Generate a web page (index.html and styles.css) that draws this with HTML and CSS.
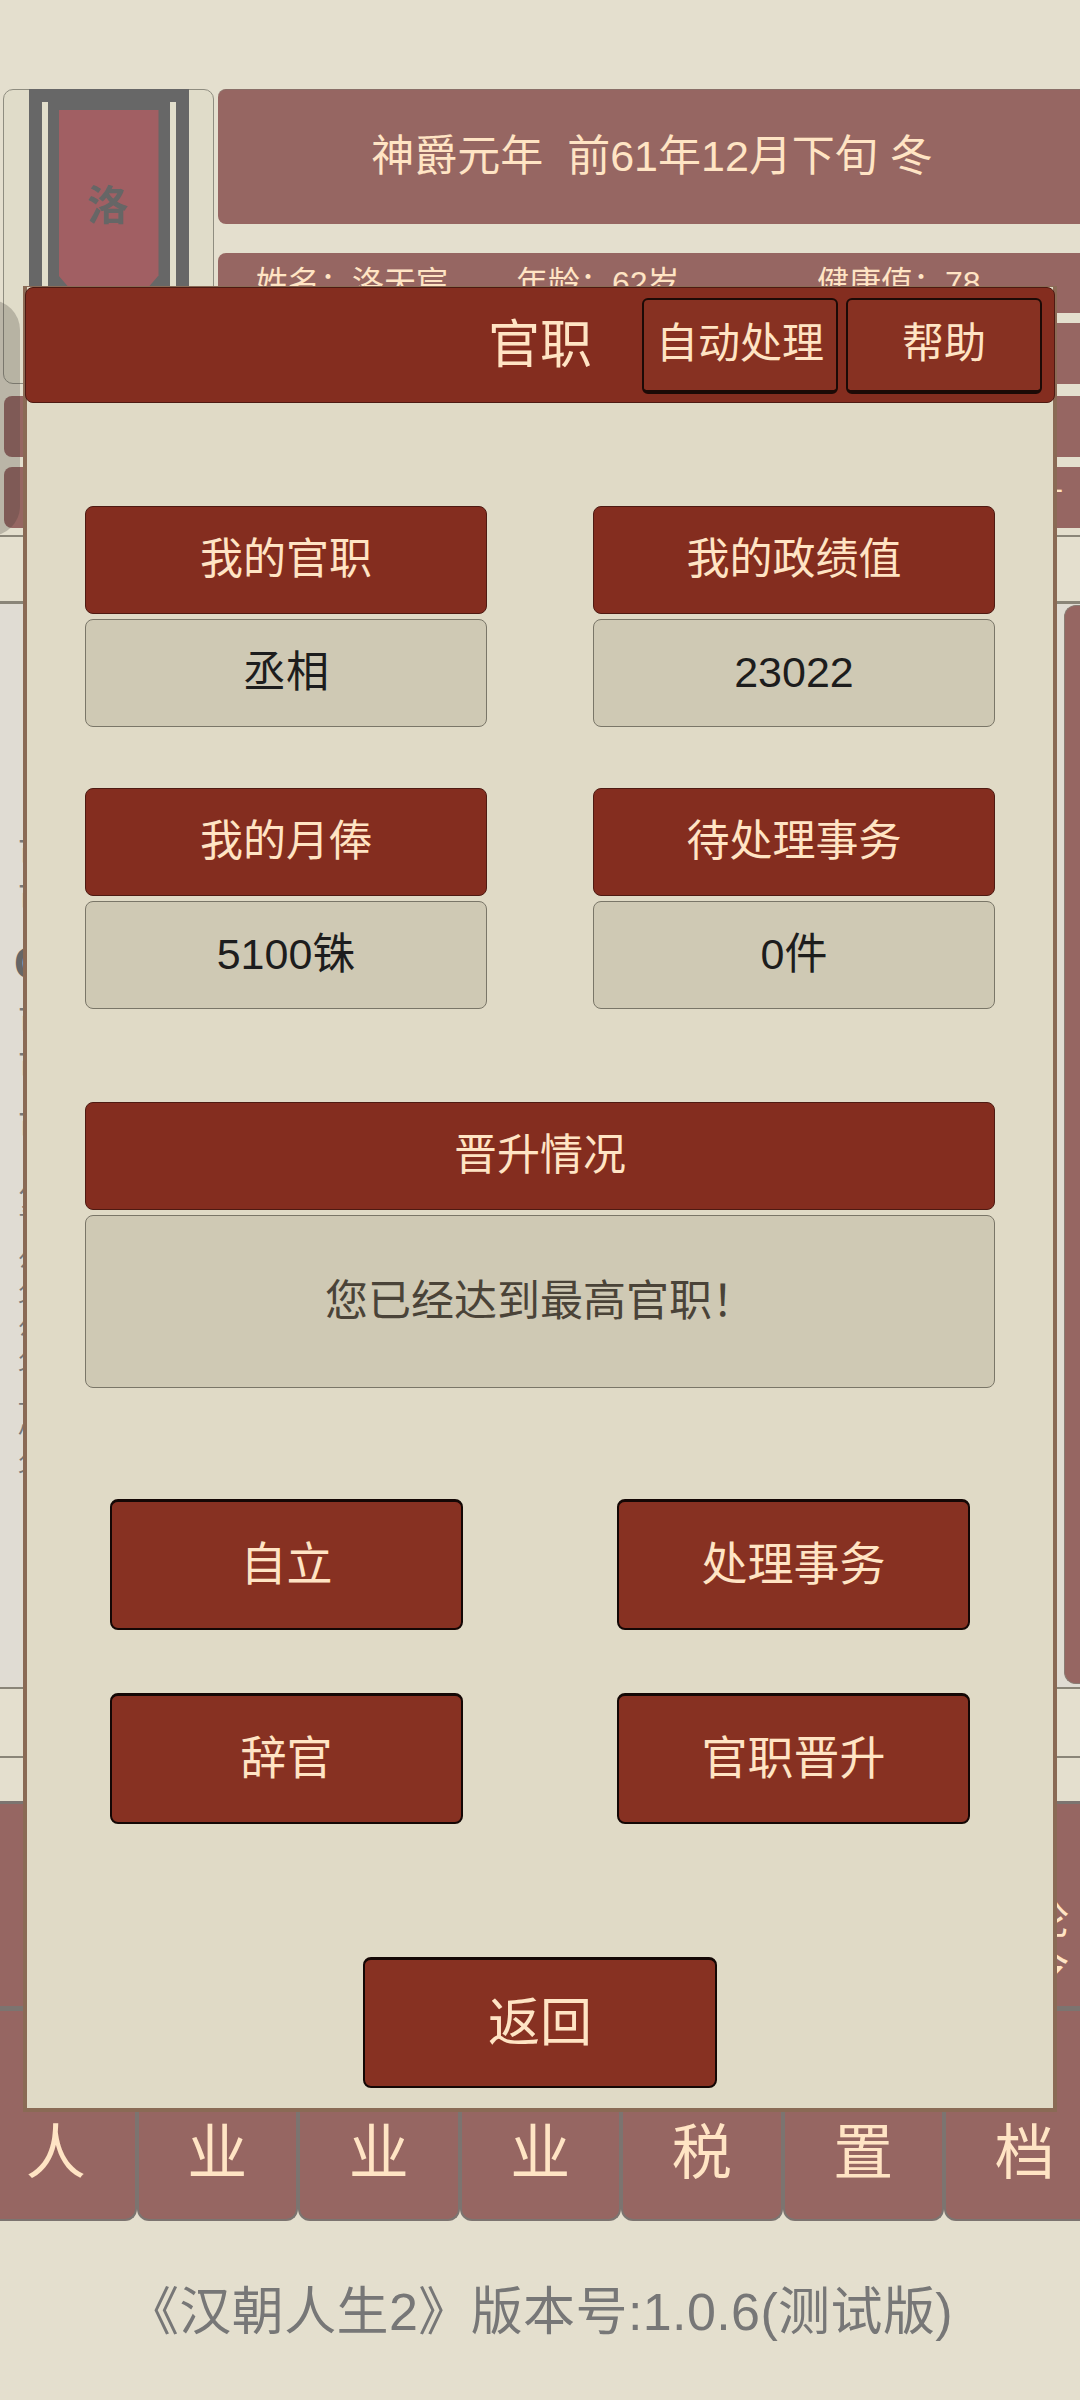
FILE: index.html
```html
<!DOCTYPE html>
<html lang="zh-CN">
<head>
    <meta charset="utf-8"/>
    <title>汉朝人生2</title>
    <link rel="stylesheet" href="styles.css">
</head>
<body>
    <div class="page">
        <div class="top">
            <div class="avatar">
                <div class="banner">
                    <div class="bannerInner">
                        <div class="bannerCloth">洛</div>
                    </div>
                </div>
            </div>
            <div class="topRight">
                <div class="dateBar">神爵元年&nbsp;&nbsp;前61年12月下旬 冬</div>
                <div class="infoBar">
                    <span class="infoName">姓名：洛天宸</span>
                    <span class="infoAge">年龄：62岁</span>
                    <span class="infoHealth">健康值：78</span>
                </div>
                <div class="statBar"></div>
            </div>
        </div>

        <div class="statRows">
            <div class="statBar"></div>
            <div class="statBar statDash">-</div>
        </div>

        <div class="tabStrip"></div>

        <div class="logPanel">
            <div class="logList">
                <p class="logLine">可</p>
                <p class="logLine">可</p>
                <p class="logLine logBig">C</p>
                <p class="logLine">可</p>
                <p class="logLine logGap">可</p>
                <p class="logLine logGap">可</p>
                <p class="logLine logWide">篁</p>
                <p class="logLine logSmall">公</p>
                <p class="logLine logSmall">父</p>
                <p class="logLine logSmall">公</p>
                <p class="logLine logSmall">父</p>
                <p class="logLine logSmall">上</p>
                <p class="logLine logSmall">小</p>
                <p class="logLine logSmall">父</p>
            </div>
            <div class="logSide"></div>
        </div>

        <div class="plainRow plainRowTall"></div>
        <div class="plainRow"></div>

        <div class="bottomBlock">
            <div class="menuTop">
                <div class="menuTopText">论<br>令</div>
            </div>
            <div class="menuTabs">
                <div class="menuTab">人</div>
                <div class="menuTab">业</div>
                <div class="menuTab">业</div>
                <div class="menuTab">业</div>
                <div class="menuTab">税</div>
                <div class="menuTab">置</div>
                <div class="menuTab">档</div>
            </div>
        </div>

        <div class="footer">《汉朝人生2》版本号:1.0.6(测试版)</div>
    </div>

    <div class="sideShade"></div>

    <div class="modal">
        <div class="modalHead">
            <span></span>
            <h1 class="modalTitle">官职</h1>
            <div class="modalTools">
                <button class="toolBtn">自动处理</button>
                <button class="toolBtn">帮助</button>
            </div>
        </div>

        <div class="fieldGrid">
            <div class="field">
                <div class="fieldLabel">我的官职</div>
                <div class="fieldValue">丞相</div>
            </div>
            <div class="field">
                <div class="fieldLabel">我的政绩值</div>
                <div class="fieldValue">23022</div>
            </div>
            <div class="field">
                <div class="fieldLabel">我的月俸</div>
                <div class="fieldValue">5100铢</div>
            </div>
            <div class="field">
                <div class="fieldLabel">待处理事务</div>
                <div class="fieldValue">0件</div>
            </div>
        </div>

        <div class="field promote">
            <div class="fieldLabel">晋升情况</div>
            <div class="fieldValue promoteText">您已经达到最高官职！</div>
        </div>

        <div class="actionGrid">
            <button class="actionBtn">自立</button>
            <button class="actionBtn">处理事务</button>
            <button class="actionBtn">辞官</button>
            <button class="actionBtn">官职晋升</button>
        </div>

        <button class="actionBtn backBtn">返回</button>
    </div>
</body>
</html>
```

FILE: styles.css
```css
*{
    margin: 0;
    padding: 0;
    box-sizing: border-box;
}
html, body{
    width: 1080px;
    height: 2400px;
    overflow: hidden;
}
body{
    position: relative;
    background: #e4dfce;
    font-family: "Liberation Sans", "Noto Sans CJK SC", sans-serif;
    line-height: 1.2;
}
.page{
    display: flex;
    flex-direction: column;
    padding-top: 89px;
}
.top{
    display: flex;
    gap: 4px;
    padding-left: 3px;
}
.avatar{
    display: flex;
    justify-content: center;
    width: 211px;
    height: 295px;
    background: #e0dcc9;
    border: 1px solid #8f8d80;
    border-radius: 10px;
}
.banner{
    width: 160px;
    height: 293px;
    margin-top: -1px;
    background: #676767;
    padding-top: 13px;
}
.bannerInner{
    display: flex;
    justify-content: center;
    width: 134px;
    height: 100%;
    margin: 0 auto;
    background: #676767;
    border-left: 6px solid #e2decb;
    border-right: 6px solid #e2decb;
    padding-top: 8px;
}
.bannerCloth{
    display: flex;
    align-items: center;
    justify-content: center;
    width: 100px;
    height: 176px;
    padding: 18px 2px 0 0;
    background: #a15f63;
    color: #666;
    font-size: 41px;
    font-weight: bold;
    clip-path: polygon(0 0, 100% 0, 100% 94%, 91% 100%, 9% 100%, 0 94%);
}
.topRight{
    flex: 1;
    display: flex;
    flex-direction: column;
}
.dateBar{
    display: flex;
    align-items: center;
    justify-content: center;
    height: 135px;
    padding-left: 6px;
    margin-bottom: 29px;
    background: #966662;
    border-top: 1px solid #8a6f68;
    border-radius: 8px 0 0 8px;
    color: #ffe4c4;
    font-size: 43px;
}
.infoBar{
    position: relative;
    height: 60px;
    margin-bottom: 10px;
    background: #966662;
    border-radius: 8px 0 0 0;
    color: #ffe4c4;
    font-size: 32px;
    line-height: 60px;
}
.infoName{
    position: absolute;
    left: 38px;
}
.infoAge{
    position: absolute;
    left: 298px;
}
.infoHealth{
    position: absolute;
    left: 599px;
}
.statBar{
    height: 61px;
    background: #966662;
    border-radius: 8px 0 0 8px;
    color: #ffe4c4;
}
.statRows{
    display: flex;
    flex-direction: column;
    gap: 10px;
    padding-left: 4px;
    margin-top: 12px;
}
.statDash{
    padding: 2px 17px 0 0;
    text-align: right;
    font-size: 30px;
    line-height: 40px;
}
.tabStrip{
    height: 69px;
    margin-top: 7px;
    border-top: 2px solid #8a8578;
    border-bottom: 3px solid #8a8578;
}
.logPanel{
    display: flex;
    height: 1083px;
    background: #e0dcd3;
}
.logList{
    flex: 1;
    padding: 228px 0 0 18px;
    overflow: hidden;
}
.logLine{
    height: 45px;
    color: #777;
    font-size: 32px;
    line-height: 45px;
    white-space: nowrap;
}
.logBig{
    height: 78px;
    padding-top: 19px;
    margin-left: -4px;
    color: #666;
    font-size: 46px;
    font-weight: bold;
}
.logGap{
    height: 60px;
}
.logWide{
    height: 78px;
    padding-top: 15px;
}
.logSmall{
    height: 34px;
    font-size: 22px;
    line-height: 34px;
}
.logSide{
    width: 16px;
    margin: 1px 0 3px;
    background: #966662;
    border: 1px solid #8a7a72;
    border-right: none;
    border-radius: 12px 0 0 12px;
}
.plainRow{
    height: 45px;
    border-top: 2px solid #8a8578;
}
.plainRowTall{
    height: 69px;
}
.bottomBlock{
    display: flex;
    flex-direction: column;
    height: 420px;
    border-top: 3px solid #7c7470;
}
.menuTop{
    display: flex;
    justify-content: flex-end;
    height: 207px;
    padding: 92px 11px 0 0;
    background: #966662;
    border-bottom: 5px solid #7c7470;
}
.menuTopText{
    color: #ffe4c4;
    font-size: 42px;
    line-height: 48px;
    text-align: center;
}
.menuTabs{
    display: grid;
    grid-template-columns: repeat(7, 161.5px);
    flex: 1;
    margin-left: -25px;
}
.menuTab{
    display: flex;
    align-items: flex-end;
    justify-content: center;
    padding-bottom: 30px;
    background: #966662;
    border: 2px solid #7c7470;
    border-top: none;
    border-radius: 0 0 12px 12px;
    color: #ffe4c4;
    font-size: 60px;
    line-height: 70px;
}
.footer{
    margin-top: 60px;
    color: #777;
    font-size: 52px;
    letter-spacing: 0.4px;
    line-height: 62px;
    text-align: center;
}
.sideShade{
    position: absolute;
    left: -60px;
    top: 300px;
    width: 80px;
    height: 236px;
    background: rgba(60, 55, 50, 0.25);
    border-radius: 30px;
}
.modal{
    position: absolute;
    left: 23px;
    top: 286px;
    display: flex;
    flex-direction: column;
    width: 1034px;
    height: 1826px;
    background: #e0dac6;
    border: 4px solid #8a6a55;
    border-top: 1px solid #8a6a55;
}
.modalHead{
    display: grid;
    grid-template-columns: 1fr auto 1fr;
    align-items: center;
    height: 116px;
    margin: 0 -2px 0 -2px;
    background: #842d1f;
    border: 1px solid #4e1a12;
    border-radius: 8px;
}
.modalTitle{
    color: #ffe4c4;
    font-size: 52px;
    font-weight: normal;
}
.modalTools{
    display: flex;
    justify-content: flex-end;
    gap: 8px;
    padding: 1px 12px 0 0;
}
.toolBtn{
    width: 196px;
    height: 96px;
    background: #873122;
    border: 2px solid #1c0a06;
    border-bottom-width: 4px;
    border-radius: 6px;
    color: #ffe4c4;
    font-family: inherit;
    font-size: 42px;
    line-height: 1.2;
}
.fieldGrid{
    display: grid;
    grid-template-columns: 402px 402px;
    justify-content: space-between;
    row-gap: 61px;
    margin: 103px 58px 0;
}
.field{
    display: flex;
    flex-direction: column;
    gap: 5px;
}
.fieldLabel{
    display: flex;
    align-items: center;
    justify-content: center;
    height: 108px;
    background: #842d1f;
    border: 1px solid #4e1a12;
    border-radius: 8px;
    color: #ffe4c4;
    font-size: 43px;
}
.fieldValue{
    display: flex;
    align-items: center;
    justify-content: center;
    height: 108px;
    background: #cfc9b4;
    border: 1px solid #7a7668;
    border-radius: 8px;
    color: #1d1d1d;
    font-size: 43px;
}
.promote{
    margin: 93px 58px 0;
}
.promoteText{
    height: 173px;
    color: #4a4338;
}
.actionGrid{
    display: grid;
    grid-template-columns: 353px 353px;
    justify-content: space-between;
    row-gap: 63px;
    margin: 111px 83px 0;
}
.actionBtn{
    height: 131px;
    background: #873122;
    border: 2px solid #140705;
    border-top-width: 3px;
    border-radius: 8px;
    color: #ffe4c4;
    font-family: inherit;
    font-size: 46px;
    line-height: 1.2;
}
.backBtn{
    align-self: center;
    width: 354px;
    margin-top: 133px;
    font-size: 52px;
}
```
